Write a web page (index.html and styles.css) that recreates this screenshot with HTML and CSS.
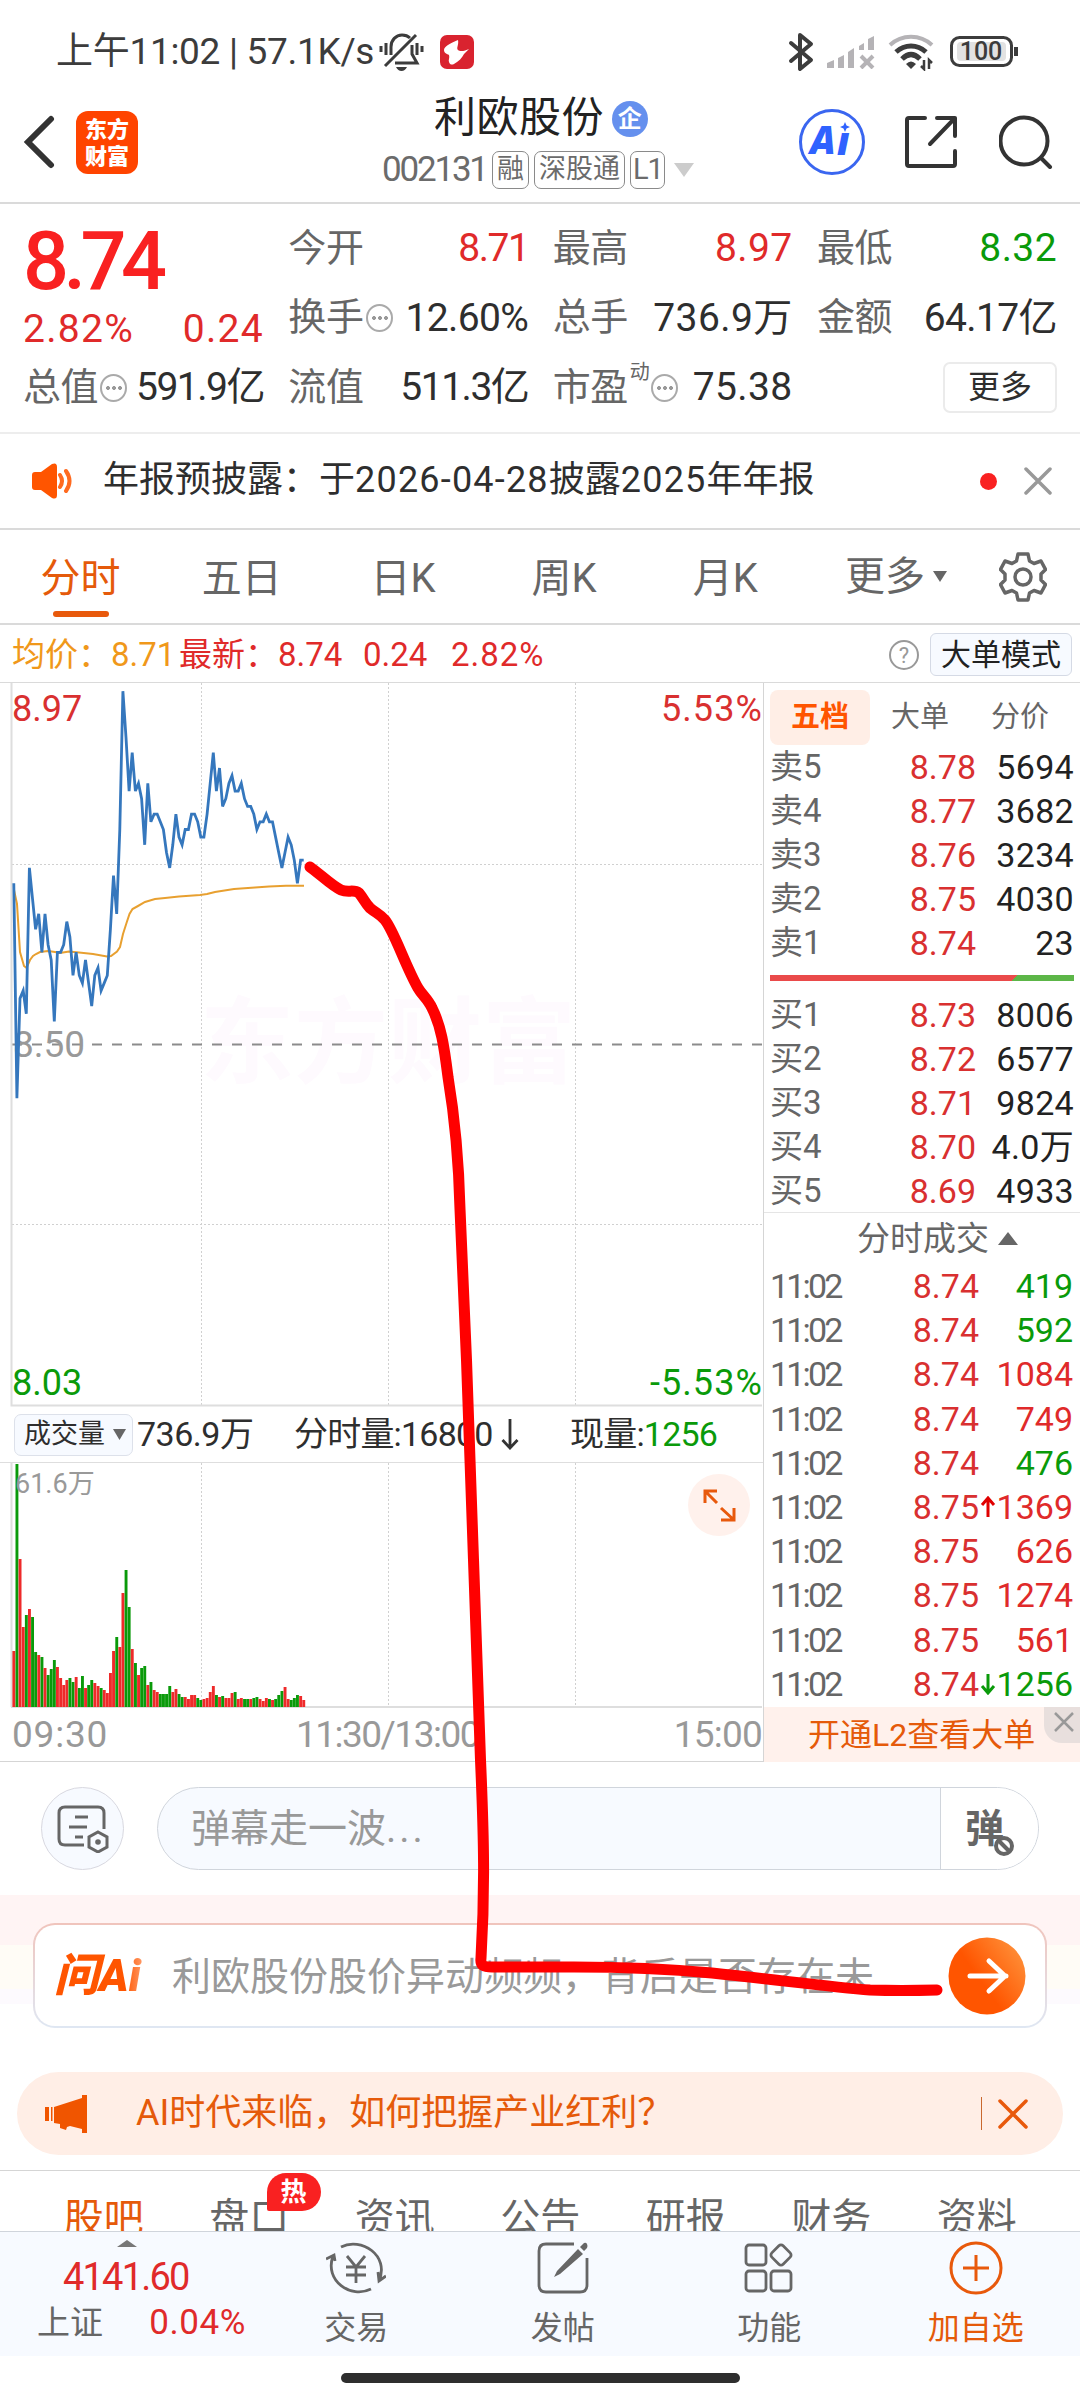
FILE: index.html
```html
<!DOCTYPE html>
<html lang="zh-CN">
<head>
  <meta charset="UTF-8">
  <title>利欧股份 002131</title>
  <link rel="stylesheet" href="styles.css">
</head>
<body>
  <div class="phone">

    <!-- status bar -->
    <div class="status">
      <span class="status-text">上午11:02 | 57.1K/s</span>
      <svg class="ic-mute" width="46" height="42" viewBox="0 0 46 42" fill="none" stroke="#3c3c3c" stroke-width="3">
        <path d="M2 15v6M7 12v12M38 12v12M43 15v6M12 24V16c0-7 5-12 11-12 3 0 6 1 8 3M33 14v9l5 9H16M6 35L37 4"/>
        <path d="M17 36h11q-2 4-5.500 4t-5.500-4z" fill="#3c3c3c" stroke="none"/>
      </svg>
      <svg class="ic-app" width="34" height="34" viewBox="0 0 34 34">
        <rect width="34" height="34" rx="7" fill="#d9232f"/>
        <path d="M18 5C10 8 4 12 4 15c0 3 3 4 5 5 1 3-1 5 0 7 1 3 3 3 5 2 5-3 8-6 10-10l5-5c-4 2-9 3-11 1s1-5 0-10z" fill="#fff"/>
      </svg>
      <div class="status-right">
        <svg width="26" height="40" viewBox="0 0 26 40" fill="none" stroke="#3c3c3c" stroke-width="4" stroke-linejoin="round" stroke-linecap="round"><path d="M3 11l20 17-11 9V3l11 9L3 29"/></svg>
        <svg class="ic-signal" width="48" height="34" viewBox="0 0 48 34" fill="#b5b3b6">
          <path d="M0 33v-5l7-3v8zM11 33V23l6-3v13zM21 33V17l6-4v20zM32 15v-4l5-3v7zM41 15V4l6-3v14z"/>
          <path d="M34 21l12 12M46 21L34 33" stroke="#b5b3b6" stroke-width="4"/>
        </svg>
        <svg class="ic-wifi" width="48" height="38" viewBox="0 0 48 38" fill="none" stroke="#3c3c3c" stroke-width="5">
          <path d="M2 12C14 1 32 1 44 12" stroke="#b5b3b6" stroke-width="4"/>
          <path d="M8 19C17 11 29 11 38 19M14 26C20 20 26 20 32 26"/>
          <path d="M18 31q5-5 10 0l-5 5z" fill="#3c3c3c" stroke="none"/>
          <path d="M36 27v9l-3-3M41 36v-9l3 3" stroke-width="2.500"/>
        </svg>
        <svg width="70" height="32" viewBox="0 0 70 32">
          <rect x="1.500" y="1.500" width="60" height="28" rx="8" fill="#fff" stroke="#3c3c3c" stroke-width="3"/>
          <rect x="7" y="6" width="49" height="19" rx="4" fill="#e2e2e2"/>
          <path d="M66 11v9" stroke="#3c3c3c" stroke-width="4"/>
          <text x="31" y="24" text-anchor="middle" class="batt">100</text>
        </svg>
      </div>
    </div>

    <!-- title bar -->
    <header class="header">
      <svg class="back" width="32" height="54" viewBox="0 0 32 54" fill="none" stroke="#333" stroke-width="6" stroke-linecap="round"><path d="M28 4L5 27l23 23"/></svg>
      <div class="logo">东方<br>财富</div>
      <div class="title">
        <div class="name">利欧股份<span class="qi">企</span></div>
        <div class="code">
          <span class="num">002131</span><span class="tag">融</span><span class="tag">深股通</span><span class="tag l1">L1</span>
          <svg width="20" height="14" viewBox="0 0 20 14"><path d="M0 0h20L10 14z" fill="#ccc"/></svg>
        </div>
      </div>
      <div class="tools">
        <svg width="68" height="68" viewBox="0 0 68 68">
          <circle cx="34" cy="34" r="31.500" fill="#fff" stroke="#3a66f0" stroke-width="3"/>
          <text x="12" y="46" class="ai-text">A</text>
          <text x="39" y="47" class="ai-text">ı</text>
          <path d="M47 14l1.500 3.500L52 19l-3.500 1.500L47 24l-1.500-3.500L42 19l3.500-1.500z" fill="#2f62ff"/>
        </svg>
        <svg class="ic-share" width="54" height="54" viewBox="0 0 54 54" fill="none" stroke="#333" stroke-width="4" stroke-linecap="round" stroke-linejoin="round"><path d="M21 3H5q-2 0-2 2v44q0 2 2 2h44q2 0 2-2V36M33 3h18v18M51 3L26 29"/></svg>
        <svg width="54" height="54" viewBox="0 0 54 54" fill="none" stroke="#333" stroke-width="4" stroke-linecap="round"><circle cx="25" cy="26" r="23.500"/><path d="M42 43l9 9"/></svg>
      </div>
    </header>

    <!-- quote -->
    <section class="quote">
      <div class="price-col">
        <div class="price">8.74</div>
        <div class="cell red change"><span>2.82%</span><span>0.24</span></div>
        <div class="cell"><span class="lb">总值<i class="dots"></i></span><span class="tight">591.9亿</span></div>
      </div>
      <div class="quote-col">
        <div class="cell"><span class="lb">今开</span><span class="red tight">8.71</span></div>
        <div class="cell"><span class="lb">换手<i class="dots"></i></span><span class="pct">12.60%</span></div>
        <div class="cell"><span class="lb">流值</span><span class="tight">511.3亿</span></div>
      </div>
      <div class="quote-col">
        <div class="cell"><span class="lb">最高</span><span class="red">8.97</span></div>
        <div class="cell"><span class="lb">总手</span><span>736.9万</span></div>
        <div class="cell"><span class="lb">市盈<sup>动</sup><i class="dots"></i></span><span>75.38</span></div>
      </div>
      <div class="quote-col">
        <div class="cell"><span class="lb">最低</span><span class="green">8.32</span></div>
        <div class="cell"><span class="lb">金额</span><span class="pct">64.17亿</span></div>
        <div class="cell last"><button class="more-btn">更多</button></div>
      </div>
    </section>

    <div class="notice">
      <svg width="42" height="36" viewBox="0 0 42 36" fill="#ff5500">
        <path d="M0 12q0-3 3-3h6L20 1q5-2 5 3v28q0 5-5 3L9 27H3q-3 0-3-3z"/>
        <path d="M28 12q4 6 0 12M34 8q7 10 0 20" fill="none" stroke="#ff6a1f" stroke-width="4" stroke-linecap="round"/>
      </svg>
      <span class="notice-text">年报预披露：于<b>2026-04-28</b>披露<b>2025</b>年年报</span>
      <i class="dot"></i>
      <svg width="28" height="28" viewBox="0 0 28 28" stroke="#999" stroke-width="3.500" stroke-linecap="round"><path d="M2 2l24 24M26 2L2 26"/></svg>
    </div>

    <nav class="tabs">
      <a class="active">分时</a><a>五日</a><a>日K</a><a>周K</a><a>月K</a>
      <span class="tabs-more">更多<svg width="14" height="11" viewBox="0 0 14 11"><path d="M0 0h14L7 11z" fill="#666"/></svg></span>
      <svg class="gear" width="48" height="50" viewBox="0 0 48 50" fill="none" stroke="#666" stroke-width="3.500" stroke-linejoin="round">
        <path d="M19 2h10l1.500 7 4.500 2.500L42 9l4.500 8.500L42 22v6l4.500 4.500L42 41l-7-2.500-4.500 2.500-1.500 7H19l-1.500-7-4.500-2.500L6 41l-4.500-8.500L6 28v-6l-4.500-4.500L6 9l7 2.500L17.500 9z"/>
        <circle cx="24" cy="25" r="8"/>
      </svg>
    </nav>

    <div class="info">
      <span class="avg">均价：</span><span class="avg v1">8.71</span>
      <span class="red last-lb">最新：</span><span class="red v2">8.74</span><span class="red v3">0.24</span><span class="red v4">2.82%</span>
      <span class="help">?</span>
      <button class="mode-btn">大单模式</button>
    </div>

    <main class="board">
      <div class="charts">
        <svg class="k-chart" width="763" height="724" viewBox="0 0 763 724">
          <text x="388" y="393" class="watermark">东方财富</text>
          <g class="grid">
            <path d="M201.500 0v722M388.500 0v722M575.500 0v722M12 181.500h750M12 541.500h750"/>
          </g>
          <path class="zero" d="M12 361.500h750"/>
          <path class="axis" d="M11.500 0v722.500H762"/>
          <text x="13" y="374" class="t-mid">8.50</text>
          <polyline class="avg-line" points="14,207 17,221 20,269 24,283 26.500,285 30,277 33,273 36,271 40,269 48,268 55,269 60,270 69,268.500 79,269.500 93,271 107,273.500 111,273 117,268.500 120,264 123,251 126.500,240 129.500,231 132.500,226 138,223 145,219 155,216 165,215 179,213.500 200,212 207,211 215,209 234,206 255,204.500 269,203.500 286,202.700 304,202.700"/>
          <polyline class="price-line" id="priceLine"/>
          <text x="12" y="38" class="t-up">8.97</text>
          <text x="763" y="38" class="t-up end">5.53%</text>
          <text x="12" y="712" class="t-down">8.03</text>
          <text x="763" y="712" class="t-down end">-5.53%</text>
        </svg>
        <div class="vol-head">
          <span class="vol-btn">成交量<svg width="13" height="11" viewBox="0 0 13 11"><path d="M0 0h13L6.500 11z" fill="#666"/></svg></span>
          <span class="vol-total">736.9万</span>
          <span class="vol-min">分时量:16800<svg width="18" height="32" viewBox="0 0 18 32" fill="none" stroke="#333" stroke-width="2.800"><path d="M9 1v29M1.500 22L9 30l7.500-8"/></svg></span>
          <span class="vol-now">现量:<b class="green">1256</b></span>
        </div>
        <svg class="v-chart" width="763" height="245" viewBox="0 0 763 245">
          <g class="grid"><path d="M201.500 0v244M388.500 0v244M575.500 0v244"/></g>
          <path class="axis" d="M11.500 0v244M11 244H762"/>
          <g id="volBars"></g>
          <text x="15" y="30" class="t-vol">61.6万</text>
          <circle cx="719" cy="42" r="31" fill="#fff1ec"/>
          <path d="M717 28h-12v12M705 28l12 12M721 57h13V45M734 57l-13-12" fill="none" stroke="#e8590c" stroke-width="3"/>
        </svg>
        <div class="times"><span class="t-open">09:30</span><span class="t-noon">11:30/13:00</span><span>15:00</span></div>
      </div>

      <aside class="book">
        <div class="book-tabs"><span class="on">五档</span><span>大单</span><span>分价</span></div>
        <div class="row"><span>卖5</span><b>8.78</b><em>5694</em></div>
        <div class="row"><span>卖4</span><b>8.77</b><em>3682</em></div>
        <div class="row"><span>卖3</span><b>8.76</b><em>3234</em></div>
        <div class="row"><span>卖2</span><b>8.75</b><em>4030</em></div>
        <div class="row"><span>卖1</span><b>8.74</b><em>23</em></div>
        <div class="ratio"></div>
        <div class="row"><span>买1</span><b>8.73</b><em>8006</em></div>
        <div class="row"><span>买2</span><b>8.72</b><em>6577</em></div>
        <div class="row"><span>买3</span><b>8.71</b><em>9824</em></div>
        <div class="row"><span>买4</span><b>8.70</b><em>4.0万</em></div>
        <div class="row"><span>买5</span><b>8.69</b><em>4933</em></div>
        <div class="ticks-head">分时成交<svg width="20" height="13" viewBox="0 0 20 13"><path d="M0 13L10 0l10 13z" fill="#666"/></svg></div>
        <div class="ticks">
          <div class="tick"><span>11:02</span><b>8.74</b><i></i><em class="green">419</em></div>
          <div class="tick"><span>11:02</span><b>8.74</b><i></i><em class="green">592</em></div>
          <div class="tick"><span>11:02</span><b>8.74</b><i></i><em class="red">1084</em></div>
          <div class="tick"><span>11:02</span><b>8.74</b><i></i><em class="red">749</em></div>
          <div class="tick"><span>11:02</span><b>8.74</b><i></i><em class="green">476</em></div>
          <div class="tick"><span>11:02</span><b>8.75</b><i><svg width="16" height="22" viewBox="0 0 16 22" fill="none" stroke="#e00000" stroke-width="3"><path d="M8 21V2M2 9l6-7 6 7"/></svg></i><em class="red">1369</em></div>
          <div class="tick"><span>11:02</span><b>8.75</b><i></i><em class="red">626</em></div>
          <div class="tick"><span>11:02</span><b>8.75</b><i></i><em class="red">1274</em></div>
          <div class="tick"><span>11:02</span><b>8.75</b><i></i><em class="red">561</em></div>
          <div class="tick"><span>11:02</span><b>8.74</b><i><svg width="16" height="22" viewBox="0 0 16 22" fill="none" stroke="#0a9a0a" stroke-width="3"><path d="M8 1v19M2 13l6 7 6-7"/></svg></i><em class="green">1256</em></div>
        </div>
        <div class="l2">
          <span>开通L2查看大单</span>
          <div class="l2-close"><svg width="20" height="20" viewBox="0 0 20 20" stroke="#999" stroke-width="2.500"><path d="M1 1l18 18M19 1L1 19"/></svg></div>
        </div>
      </aside>
    </main>

    <div class="danmu">
      <div class="danmu-set">
        <svg width="52" height="48" viewBox="0 0 52 48" fill="none" stroke="#666" stroke-width="3">
          <path d="M27 40H8q-6 0-6-6V8q0-6 6-6h33q6 0 6 6v16M18 12h13M12 22h18M18 32h8"/>
          <path d="M41 27l9 5v10l-9 5-9-5V32z"/><circle cx="41" cy="37" r="2.800" fill="#666" stroke="none"/>
        </svg>
      </div>
      <div class="danmu-input">
        <span>弹幕走一波<span class="ell">...</span></span>
        <div class="danmu-off">弹
          <svg class="ban" width="22" height="22" viewBox="0 0 22 22" fill="#fff" stroke="#666" stroke-width="4"><circle cx="11" cy="11" r="8"/><path d="M6 6l10 10"/></svg>
        </div>
      </div>
    </div>

    <div class="ask-wrap">
      <div class="ask">
        <span class="ask-logo">问Ai</span>
        <span class="ask-text">利欧股份股价异动频频，背后是否存在未</span>
        <svg width="78" height="78" viewBox="0 0 78 78">
          <defs><linearGradient id="go" x1="0.200" y1="0.700" x2="0.900" y2="0.200"><stop offset="0.300" stop-color="#ff5500"/><stop offset="1" stop-color="#ff8a33"/></linearGradient></defs>
          <circle cx="39" cy="39" r="38.500" fill="url(#go)"/>
          <path d="M22 39h36M41 24l16 15-16 15" fill="none" stroke="#fff" stroke-width="5" stroke-linecap="round" stroke-linejoin="round"/>
        </svg>
      </div>
    </div>

    <div class="promo">
      <svg width="42" height="38" viewBox="0 0 42 38" fill="#f05500"><path d="M0 12h4v14H0zM6 12h1.500v14H6zM9 12L37 3V0h5v38h-5v-4l-12-3-3 1-1 3-6-2v-4l-6-1z"/></svg>
      <span class="promo-text">AI时代来临，如何把握产业红利？</span>
      <i class="bar"></i>
      <svg width="30" height="30" viewBox="0 0 30 30" stroke="#e8590c" stroke-width="3.500" stroke-linecap="round"><path d="M2 2l26 26M28 2L2 28"/></svg>
    </div>

    <nav class="sections">
      <a class="active">股吧</a><a>盘口<span class="hot">热</span></a><a>资讯</a><a>公告</a><a>研报</a><a>财务</a><a>资料</a>
    </nav>

    <footer class="bottom">
      <div class="index">
        <svg width="20" height="7" viewBox="0 0 20 7"><path d="M0 7L10 0l10 7z" fill="#777"/></svg>
        <div class="idx-val red">4141.60</div>
        <div class="idx-row"><span>上证</span><span class="red">0.04%</span></div>
      </div>
      <div class="act">
        <svg width="60" height="54" viewBox="0 0 60 54" fill="none" stroke="#666" stroke-width="2.800">
          <path d="M15 6C35-4 64 14 53 40M60 35l-7 5-1-9M45 48C25 58-2 40 7 15M0 18l8-4 1 6"/>
          <path d="M21 15l9 11 9-11M20 26h20M20 34h20M30 26v16"/>
        </svg>
        <span>交易</span>
      </div>
      <div class="act">
        <svg width="54" height="54" viewBox="0 0 54 54" fill="none" stroke="#666" stroke-width="2.800">
          <path d="M38 3H10q-7 0-7 7v34q0 7 7 7h34q7 0 7-7V17"/>
          <path d="M42 8l5 5-23 20-6 3 3-6zM44 6l4-4q2-1 3 1t0 4l-3 3z" fill="#666" stroke="none"/>
        </svg>
        <span>发帖</span>
      </div>
      <div class="act">
        <svg width="50" height="54" viewBox="0 0 50 54" fill="none" stroke="#666" stroke-width="2.800">
          <rect x="2" y="4" width="20" height="20" rx="3"/><rect x="2" y="30" width="20" height="20" rx="3"/><rect x="27" y="30" width="20" height="20" rx="3"/>
          <rect x="29" y="6" width="16" height="16" rx="3" transform="rotate(45 37 14)"/>
        </svg>
        <span>功能</span>
      </div>
      <div class="act add">
        <svg width="54" height="54" viewBox="0 0 54 54" fill="none" stroke="#e8590c" stroke-width="3"><circle cx="27" cy="27" r="25"/><path d="M27 14v26M14 27h26"/></svg>
        <span>加自选</span>
      </div>
    </footer>
    <div class="home"><i></i></div>

    <!-- hand drawn forecast line -->
    <svg class="scribble" width="1080" height="2400" viewBox="0 0 1080 2400">
      <path d="M310 867C320 874 332 886 341 890C348 893 354 889 359 893C364 899 365 903 370 908C376 913 380 914 385 920C394 931 405 965 418 988C422 995 428 999 432 1008C441 1026 444 1045 448 1077C456 1125 459 1170 460 1209L466.500 1360L473.500 1560L480.500 1760C484 1840 485 1890 481 1958C480 1966 484 1967 492 1967H574C640 1967 680 1970 712 1973C780 1980 830 1987 870 1990Q900 1991 937 1990"/>
    </svg>
  </div>

  <script src="chart.js"></script>
</body>
</html>
```

FILE: styles.css
```css
* {
  box-sizing: border-box;
}

body {
  margin: 0;
  background: #fff;
  color: #2e2e2e;
  font-family: Roboto, "Noto Sans CJK SC", sans-serif;
  font-size: 36px;
  line-height: 1.2;
}

button {
  font-family: inherit;
  padding: 0;
}

svg {
  display: block;
  flex-shrink: 0;
}

i, em {
  font-style: normal;
}

.phone {
  position: relative;
  width: 1080px;
  height: 2400px;
  overflow: hidden;
  display: flex;
  flex-direction: column;
  white-space: nowrap;
}

.phone > * {
  flex-shrink: 0;
}

.red {
  color: #e02a2a;
}

.green {
  color: #0a9a0a;
}

/* status bar */
.status {
  height: 84px;
  padding: 20px 60px 0 56px;
  display: flex;
  align-items: center;
  color: #3c3c3c;
}

.status-text {
  font-size: 37px;
  width: 323px;
  letter-spacing: -0.3px;
  line-height: 64px;
}

.ic-app {
  margin-left: 15px;
}

.status-right {
  margin-left: auto;
  display: flex;
  align-items: center;
}

.ic-signal {
  margin-left: 13px;
}

.ic-wifi {
  margin: 0 14px 0 13px;
}

.batt {
  font-size: 25px;
  font-weight: 500;
  fill: #3c3c3c;
}

/* title bar */
.header {
  height: 120px;
  padding: 0 27px 2px 23px;
  display: flex;
  align-items: center;
  border-bottom: 2px solid #dadada;
}

.logo {
  width: 62px;
  height: 63px;
  margin-left: 21px;
  padding-top: 5px;
  border-radius: 12px;
  background: #ff4400;
  color: #fff;
  font-size: 22px;
  font-weight: 900;
  line-height: 27px;
  text-align: center;
}

.title {
  width: 312px;
  margin-left: 244px;
}

.name {
  display: flex;
  align-items: center;
  height: 56px;
  margin-left: 52px;
  padding-top: 3px;
  font-size: 42px;
  letter-spacing: 0.5px;
  color: #222;
}

.qi {
  width: 36px;
  height: 36px;
  margin-left: 8px;
  border-radius: 50%;
  background: #6590ee;
  color: #fff;
  font-size: 24px;
  font-weight: 700;
  line-height: 36px;
  text-align: center;
}

.code {
  display: flex;
  align-items: center;
  height: 50px;
  color: #6b6b6b;
  font-size: 35px;
}

.code .num {
  width: 112px;
  margin-right: 4px;
  letter-spacing: -2.2px;
}

.tag {
  height: 38px;
  margin-right: 5px;
  padding: 0 4px;
  border: 1.5px solid #8a8a8a;
  border-radius: 7px;
  font-size: 27px;
  line-height: 35px;
}

.l1 {
  width: 35px;
  padding: 0 2px;
  font-size: 29px;
  text-align: center;
  letter-spacing: -1px;
}

.code svg {
  margin-left: 4px;
}

.tools {
  display: flex;
  align-items: center;
  margin-left: auto;
}

.ai-text {
  font-family: "Noto Sans", sans-serif;
  font-size: 38px;
  font-weight: 900;
  font-style: italic;
  fill: #2f62ff;
}

.ic-share {
  margin: 0 41px 0 38px;
}

/* quote block */
.quote {
  height: 230px;
  padding: 10px 23px 0 23px;
  display: grid;
  grid-template-columns: 241px 240px 240px 240px;
  justify-content: space-between;
  border-bottom: 2px solid #ededed;
}

.cell {
  display: flex;
  justify-content: space-between;
  align-items: center;
  height: 69.5px;
  font-size: 39px;
  letter-spacing: 0.4px;
}

.tight {
  letter-spacing: -1.5px;
}

.pct {
  letter-spacing: -0.6px;
}

.lb {
  display: flex;
  align-items: center;
  color: #666;
  font-size: 38px;
  letter-spacing: -0.4px;
}

.dots {
  width: 27px;
  height: 28px;
  margin-left: 2px;
  border: 2px solid #aaa;
  border-radius: 50%;
  background:
    radial-gradient(circle at 6px 12px, #999 1.7px, transparent 2.2px),
    radial-gradient(circle at 12px 12px, #999 1.7px, transparent 2.2px),
    radial-gradient(circle at 18px 12px, #999 1.7px, transparent 2.2px);
}

.lb sup {
  margin: 0 0 32px 2px;
  font-size: 20px;
  line-height: 24px;
}

.price {
  height: 91px;
  padding-top: 2px;
  color: #f92121;
  font-size: 81px;
  font-weight: 500;
  letter-spacing: -5.5px;
  line-height: 91px;
}

.change {
  height: 48px;
  letter-spacing: 1.3px;
}

.last {
  justify-content: flex-end;
}

.more-btn {
  width: 114px;
  height: 51px;
  border: 2px solid #ebebeb;
  border-radius: 7px;
  background: #fff;
  color: #2e2e2e;
  font-size: 32px;
  line-height: 47px;
}

/* notice */
.notice {
  height: 96px;
  padding: 0 28px 0 32px;
  display: flex;
  align-items: center;
  border-bottom: 2px solid #dadada;
}

.notice-text {
  margin-left: 29px;
  font-size: 36px;
}

.notice-text b {
  font-weight: 400;
  letter-spacing: 1.2px;
}

.dot {
  width: 17px;
  height: 17px;
  margin: 0 27px 0 auto;
  border-radius: 50%;
  background: #f92121;
}

/* period tabs */
.tabs {
  height: 95px;
  display: flex;
  align-items: center;
  border-bottom: 2px solid #dadada;
  color: #666;
  font-size: 40px;
}

.tabs a {
  width: 161.2px;
  height: 93px;
  display: flex;
  flex-direction: column;
  align-items: center;
  line-height: 97px;
}

.tabs .active {
  color: #e55a0a;
}

.tabs .active::after {
  content: "";
  width: 56px;
  height: 6px;
  margin-top: -16px;
  border-radius: 3px;
  background: #e8590c;
}

.tabs-more {
  display: flex;
  align-items: center;
  gap: 8px;
  margin-left: 39px;
}

.gear {
  margin: 0 33px 0 auto;
}

/* average / last line */
.info {
  height: 58px;
  padding: 2px 8px 0 12px;
  display: flex;
  align-items: center;
  border-bottom: 1px solid #dadada;
  font-size: 33px;
}

.avg {
  color: #f0981a;
}

.v1 {
  width: 67px;
}

.last-lb {
  margin-left: 1px;
}

.v2 {
  width: 85px;
}

.v3 {
  width: 88px;
}

.v4 {
  letter-spacing: 1px;
}

.help {
  width: 30px;
  height: 30px;
  margin: 0 11px 0 auto;
  border: 2px solid #999;
  border-radius: 50%;
  color: #999;
  font-size: 22px;
  line-height: 27px;
  text-align: center;
}

.mode-btn {
  width: 142px;
  height: 43px;
  border: 1px solid #d5dae5;
  border-radius: 6px;
  background: #f7faff;
  color: #222;
  font-size: 30px;
  line-height: 41px;
}

/* chart and order book */
.board {
  display: flex;
  height: 1079px;
  border-bottom: 1px solid #d5d5d5;
}

.charts {
  width: 764px;
  border-right: 1px solid #d5d5d5;
}

.grid path {
  stroke: #d0d0d0;
  stroke-width: 1;
  stroke-dasharray: 2 2;
}

.axis {
  fill: none;
  stroke: #dedede;
  stroke-width: 2;
}

.zero {
  stroke: #8c8c8c;
  stroke-width: 2;
  stroke-dasharray: 10 10;
}

.avg-line {
  fill: none;
  stroke: #e8a030;
  stroke-width: 2;
}

.price-line {
  fill: none;
  stroke: #3577bd;
  stroke-width: 2.8;
}

.watermark {
  fill: #fefafe;
  font-size: 94px;
  font-weight: 700;
  text-anchor: middle;
}

.t-up, .t-down, .t-mid {
  font-size: 36px;
}

.t-up {
  fill: #d93030;
}

.t-down {
  fill: #0a9a0a;
}

.t-mid {
  fill: #999;
  font-size: 37px;
}

.t-vol {
  fill: #999;
  font-size: 27px;
}

.end {
  text-anchor: end;
  letter-spacing: 1.1px;
}

.vol-head {
  height: 56px;
  padding-left: 14px;
  display: flex;
  align-items: center;
  border-bottom: 1px solid #dedede;
  font-size: 34px;
}

.vol-btn {
  width: 119px;
  height: 42px;
  padding-left: 9px;
  display: flex;
  align-items: center;
  gap: 8px;
  border: 1px solid #dde1ea;
  border-radius: 7px;
  background: #f7faff;
  font-size: 27px;
}

.vol-total {
  width: 157px;
  padding-left: 4px;
  letter-spacing: -0.5px;
}

.vol-min {
  width: 276px;
  display: flex;
  align-items: center;
  gap: 8px;
  margin-left: 4px;
  letter-spacing: -0.8px;
}

.vol-now {
  letter-spacing: -0.8px;
}

.vol-now b {
  font-weight: 400;
}

.times {
  display: flex;
  justify-content: space-between;
  height: 54px;
  padding: 0 1px 0 12px;
  color: #999;
  font-size: 37px;
  line-height: 54px;
  letter-spacing: -0.8px;
}

.t-open {
  letter-spacing: 0.8px;
}

.t-noon {
  margin-right: 7px;
  letter-spacing: -1.5px;
}

.book {
  flex: 1;
}

.book-tabs {
  height: 62px;
  padding: 7px 10px 0 6px;
  display: flex;
  color: #666;
  font-size: 29px;
  line-height: 55px;
}

.book-tabs span {
  flex: 1;
  text-align: center;
}

.book-tabs .on {
  border-radius: 8px;
  background: #ffeee6;
  color: #ff5500;
  font-weight: 700;
}

.row, .tick {
  display: grid;
  align-items: center;
  height: 44.1px;
  padding: 0 6px 0 6px;
  font-size: 34px;
  line-height: 44px;
}

.row {
  grid-template-columns: 60px 146px 98px;
}

.row span {
  font-size: 33px;
}

.row span, .tick span {
  color: #666;
}

.row b, .tick b {
  color: #d93030;
  font-weight: 400;
  text-align: right;
}

.row em, .tick em {
  justify-self: end;
}

.row em {
  color: #222;
  letter-spacing: 0.3px;
}

.ratio {
  height: 6px;
  margin: 10px 6px 11px 6px;
  background: linear-gradient(135deg, #ea4a4a 79.700%, #5cb648 79.700%);
}

.ticks-head {
  height: 52px;
  margin-top: -1px;
  padding-left: 93px;
  display: flex;
  align-items: center;
  gap: 9px;
  border-top: 1px solid #e5e5e5;
  color: #666;
  font-size: 33px;
}

.tick {
  grid-template-columns: 80px 129px 18px 76px;
  height: 44.2px;
}

.tick span {
  letter-spacing: -2.8px;
}

.tick i {
  justify-self: center;
}

.l2 {
  display: flex;
  height: 55px;
  margin-top: 1px;
  padding-left: 44px;
  background: #fff1ec;
  color: #e55a0a;
  font-size: 32px;
  line-height: 56px;
}

.l2-close {
  width: 36px;
  height: 36px;
  margin-left: auto;
  padding: 5px 0 0 10px;
  border-bottom-left-radius: 18px;
  background: #e8dfdd;
}

/* danmu bar */
.danmu {
  height: 133px;
  padding: 25px 41px 0 41px;
  display: flex;
  justify-content: space-between;
}

.danmu-set {
  width: 83px;
  height: 83px;
  display: flex;
  align-items: center;
  justify-content: center;
  border: 1px solid #d8d8e0;
  border-radius: 50%;
  background: #f7faff;
}

.danmu-input {
  width: 882px;
  height: 83px;
  padding-left: 33px;
  display: flex;
  justify-content: space-between;
  overflow: hidden;
  border: 1px solid #d0d5dc;
  border-radius: 42px;
  background: #f7faff;
  color: #999;
  font-size: 39px;
  line-height: 83px;
}

.ell {
  letter-spacing: 3px;
}

.danmu-off {
  position: relative;
  width: 98px;
  padding-left: 24px;
  border-left: 1px solid #d0d5dc;
  background: #fff;
  color: #666;
  font-weight: 700;
}

.ban {
  position: absolute;
  left: 52px;
  top: 47px;
}

/* ask ai */
.ask-wrap {
  height: 177px;
  padding: 28px 33px 0;
  background: linear-gradient(#fff4f4 0 50px, #fffcf6 50px 94px, #fdfafe 94px 109px, #fff 109px);
}

.ask {
  height: 105px;
  padding: 0 19px 0 19px;
  display: flex;
  align-items: center;
  border: 2px solid transparent;
  border-radius: 22px;
  background: linear-gradient(#fff, #fff) padding-box, linear-gradient(#f0c4bc, #dfe7f3) border-box;
}

.ask-logo {
  width: 118px;
  color: #ff5500;
  background: linear-gradient(90deg, #ff5500 60%, #ff9a66 75%);
  -webkit-background-clip: text;
  -webkit-text-fill-color: transparent;
  font-size: 45px;
  font-weight: 900;
  font-style: italic;
  line-height: 60px;
}

.ask-text {
  width: 740px;
  padding-top: 3px;
  color: #999;
  font-size: 39px;
}

.ask svg {
  margin-left: auto;
}

/* promo */
.promo {
  height: 83px;
  margin: 0 17px 15px;
  padding: 0 35px 0 28px;
  display: flex;
  align-items: center;
  border-radius: 42px;
  background: #ffeee6;
  color: #e55a0a;
}

.promo-text {
  margin-left: 49px;
  font-size: 36px;
}

.bar {
  width: 1px;
  height: 33px;
  margin: 0 16px 0 auto;
  background: #c9682e;
}

/* section tabs, cut off by the bottom bar */
.sections {
  height: 61px;
  padding: 0 29px 0 31px;
  display: flex;
  border-top: 1px solid #d5d5d5;
  color: #666;
  font-size: 40px;
  line-height: 96px;
}

.sections a {
  position: relative;
  width: 145.5px;
  height: 60px;
  overflow: hidden;
  text-align: center;
}

.sections .active {
  color: #e55a0a;
}

.hot {
  position: absolute;
  left: 90px;
  top: 2px;
  width: 54px;
  height: 38px;
  border-radius: 19px 19px 19px 2px;
  background: #f92121;
  color: #fff;
  font-size: 26px;
  font-weight: 700;
  line-height: 38px;
}

/* bottom bar */
.bottom {
  height: 125px;
  display: flex;
  border-top: 1px solid #d0d5dc;
  background: #f7faff;
  color: #666;
}

.index {
  width: 253px;
  padding-top: 8px;
}

.index svg {
  margin-left: 117px;
}

.idx-val {
  padding: 2px 0 0 63px;
  font-size: 38px;
  line-height: 56px;
  letter-spacing: -1.8px;
}

.idx-row {
  display: flex;
  justify-content: space-between;
  padding: 0 7px 0 37px;
  font-size: 35px;
  line-height: 36px;
}

.idx-row .red {
  letter-spacing: 0.6px;
}

.idx-row span:first-child {
  font-size: 33px;
}

.act {
  width: 206.500px;
  padding-top: 9px;
  display: flex;
  flex-direction: column;
  align-items: center;
  font-size: 32px;
  line-height: 67px;
}

.add {
  color: #e55a0a;
}

.home {
  padding-top: 17px;
}

.home i {
  display: block;
  width: 399px;
  height: 10px;
  margin: 0 auto;
  border-radius: 5px;
  background: #2e2e2e;
}

.scribble {
  position: absolute;
  left: 0;
  top: 0;
  fill: none;
  stroke: #ff0000;
  stroke-width: 11;
  stroke-linecap: round;
  stroke-linejoin: round;
}
```

FILE: chart.js
```js
// minute prices, in cents above/below the 8.50 previous close
const prices = [
  21, -7, 6, 7, 4, 23, 19, 15, 17, 12, 17, 13, 11, 3, 12, 12, 13, 16, 14, 9,
  12, 9, 8, 11, 8, 5, 9, 10, 7, 8, 9, 15, 22, 17, 28, 46, 40, 33, 38, 33,
  34, 32, 26, 34, 29, 30, 30, 29, 28, 25, 23, 26, 30, 27, 26, 28, 28, 30, 30, 29,
  27, 27, 30, 34, 38, 33, 36, 31, 32, 34, 35, 33, 33, 34, 32, 31, 31, 30, 28, 29,
  29, 30, 29, 29, 27, 25, 23, 25, 27, 26, 24, 21, 24, 24
];

// bar heights and direction, r = up, g = down
const volumes = [
  56, 243, 148, 80, 92, 98, 90, 55, 52, 50, 39, 32, 38, 47, 40, 29, 22, 27, 29, 25,
  30, 19, 31, 19, 22, 27, 24, 21, 19, 17, 14, 34, 56, 70, 60, 114, 137, 100, 58, 44,
  32, 39, 41, 22, 25, 17, 15, 13, 13, 13, 21, 15, 18, 13, 10, 10, 8, 12, 12, 9,
  7, 8, 9, 15, 21, 12, 10, 11, 9, 9, 14, 15, 8, 9, 8, 8, 8, 9, 10, 8,
  6, 9, 8, 7, 8, 12, 16, 20, 8, 7, 9, 12, 11, 7
];
const dirs =
  'rgrrgrggrg' + 'rgggrrrrgg' + 'rggrggrrgr' + 'rrrgrrggrg' +
  'rggrgrrggg' + 'grrggrrrrg' + 'grrrrgrgrr' + 'rgrrggrggr' +
  'rrgrgggrrg' + 'ggrr';

const STEP = 3.117;
const X0 = 13.8;

document.getElementById('priceLine').setAttribute('points',
  prices.map((p, i) => `${(X0 + i * STEP).toFixed(1)},${(361.5 - p * 7.68).toFixed(1)}`).join(' '));

const svgNS = 'http://www.w3.org/2000/svg';
const bars = document.getElementById('volBars');
volumes.forEach((h, i) => {
  const bar = document.createElementNS(svgNS, 'rect');
  bar.setAttribute('x', (X0 - 1.4 + i * STEP).toFixed(1));
  bar.setAttribute('y', 244 - h);
  bar.setAttribute('width', 2.9);
  bar.setAttribute('height', h);
  bar.setAttribute('fill', dirs[i] === 'r' ? '#ee2a2a' : '#0a9a0a');
  bars.appendChild(bar);
});
```
